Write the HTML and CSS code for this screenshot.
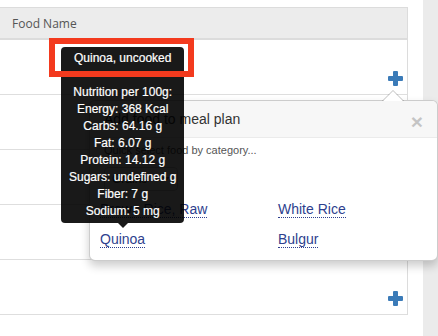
FILE: index.html
```html
<!DOCTYPE html>
<html lang="en">
<head>
  <meta charset="UTF-8" />
  <meta name="viewport" content="width=device-width, initial-scale=1.0"/>
  <title>Meal Planner - Foods</title>
  <link rel="stylesheet" href="styles.css">
</head>
<body>
  <div class="page">
    <div class="content">
      <div class="food-table">
        <div class="head">Food Name</div>
        <div class="row">
          <a href="#" class="add-btn"><svg viewBox="0 0 15 15" width="15" height="15"><rect x="5" y="0" width="5" height="15" rx="1"/><rect x="0" y="5" width="15" height="5" rx="1"/></svg></a>
        </div>
        <div class="row">
          <a href="#" class="add-btn"><svg viewBox="0 0 15 15" width="15" height="15"><rect x="5" y="0" width="5" height="15" rx="1"/><rect x="0" y="5" width="15" height="5" rx="1"/></svg></a>
        </div>
        <div class="row">
          <a href="#" class="add-btn"><svg viewBox="0 0 15 15" width="15" height="15"><rect x="5" y="0" width="5" height="15" rx="1"/><rect x="0" y="5" width="15" height="5" rx="1"/></svg></a>
        </div>
        <div class="row">
          <a href="#" class="add-btn"><svg viewBox="0 0 15 15" width="15" height="15"><rect x="5" y="0" width="5" height="15" rx="1"/><rect x="0" y="5" width="15" height="5" rx="1"/></svg></a>
        </div>
        <div class="row">
          <a href="#" class="add-btn"><svg viewBox="0 0 15 15" width="15" height="15"><rect x="5" y="0" width="5" height="15" rx="1"/><rect x="0" y="5" width="15" height="5" rx="1"/></svg></a>
        </div>
      </div>
    </div>
    <div class="scroll-strip"></div>

    <!-- popover opened from the first plus button -->
    <div class="popover">
      <div class="popover-arrow"></div>
      <div class="popover-title">
        <span>Add food to meal plan</span>
        <span class="close">&times;</span>
      </div>
      <div class="popover-content">
        <p class="quick">Quick select food by category...</p>
        <div class="category-select"><span>Grains</span><span class="caret"></span></div>
        <div class="quick-links">
          <div><a href="#">Brown Rice, Raw</a></div>
          <div><a href="#">White Rice</a></div>
          <div><a href="#">Quinoa</a></div>
          <div><a href="#">Bulgur</a></div>
        </div>
      </div>
    </div>

    <div class="tooltip">
      Quinoa, uncooked<br><br>
      Nutrition per 100g:<br>
      Energy: 368 Kcal<br>
      Carbs: 64.16 g<br>
      Fat: 6.07 g<br>
      Protein: 14.12 g<br>
      Sugars: undefined g<br>
      Fiber: 7 g<br>
      Sodium: 5 mg
    </div>

    <div class="highlight"></div>
  </div>
</body>
</html>
```

FILE: styles.css
```css
* {
  margin: 0;
  padding: 0;
  box-sizing: border-box;
}

body {
  width: 438px;
  height: 336px;
  overflow: hidden;
  background-color: #fff;
  font-family: "Liberation Sans", Arial, sans-serif;
  color: #333;
}

.page {
  position: relative;
  display: flex;
  height: 336px;
}

.content {
  width: 423px;
  padding-top: 7px;
}

.scroll-strip {
  flex-grow: 1;
  background-color: #ebebeb;
}

.food-table {
  width: 408px;
  border-top: 1px solid #dcdcdc;
  border-right: 1px solid #dcdcdc;
}

.food-table .head {
  height: 32px;
  display: flex;
  align-items: center;
  padding-left: 12px;
  background-color: #ececec;
  border-bottom: 2px solid #dcdcdc;
  font-family: "Open Sans", sans-serif;
  font-size: 12px;
  color: #555;
}

.food-table .row {
  height: 55px;
  display: flex;
  justify-content: flex-end;
  align-items: flex-end;
  padding: 0 4px 8px 0;
  border-bottom: 1px solid #dedede;
}

.add-btn {
  display: block;
  width: 15px;
  height: 15px;
}

.add-btn svg {
  display: block;
  fill: #3b7bb8;
}

/* popover */
.popover {
  position: absolute;
  left: 89px;
  top: 100px;
  width: 349px;
  background-color: #fff;
  border: 1px solid rgba(0,0,0,0.2);
  border-radius: 6px;
  box-shadow: 0 5px 10px rgba(0,0,0,0.2);
}

.popover-arrow {
  position: absolute;
  top: -11px;
  left: 292px;
  width: 0;
  height: 0;
  border-style: solid;
  border-width: 0 11px 11px;
  border-color: transparent transparent rgba(0,0,0,0.25);
}

.popover-arrow::after {
  content: "";
  position: absolute;
  top: 1px;
  left: -10px;
  border-style: solid;
  border-width: 0 10px 10px;
  border-color: transparent transparent #fff;
}

.popover-title {
  display: flex;
  justify-content: space-between;
  align-items: center;
  height: 37px;
  padding: 0 14px;
  font-size: 14px;
  line-height: 20px;
  background-color: #f7f7f7;
  border-bottom: 1px solid #ebebeb;
  border-radius: 5px 5px 0 0;
}

.popover-title .close {
  font-size: 21px;
  font-weight: bold;
  line-height: 20px;
  color: #000;
  opacity: 0.2;
  margin-top: 5px;
}

.popover-content {
  padding: 4px 14px 11px;
}

.quick {
  font-size: 11px;
  line-height: 16px;
  color: #555;
}

.category-select {
  margin-top: 9px;
  width: 74px;
  height: 24px;
  display: flex;
  align-items: center;
  justify-content: space-between;
  padding: 0 7px;
  border: 1px solid #ccc;
  border-radius: 4px;
  font-size: 12px;
}

.caret {
  border-style: solid;
  border-width: 4px 4px 0;
  border-color: #555 transparent transparent;
}

.quick-links {
  margin-top: 8px;
  margin-left: -4px;
  display: grid;
  grid-template-columns: 178px 1fr;
  row-gap: 10px;
  font-size: 14px;
  line-height: 20px;
}

.quick-links a {
  color: #2e3f8e;
  text-decoration: none;
  border-bottom: 1px dotted #2e3f8e;
}

/* nutrition tooltip */
.tooltip {
  position: absolute;
  left: 61px;
  top: 47px;
  padding: 3px 8px;
  background-color: rgba(0,0,0,0.9);
  color: #fff;
  border-radius: 4px;
  font-size: 12px;
  line-height: 17px;
  text-align: center;
  white-space: nowrap;
  -webkit-text-stroke: 0.2px #fff;
}

.tooltip::after {
  content: "";
  position: absolute;
  bottom: -5px;
  left: 50%;
  margin-left: -5px;
  border-style: solid;
  border-width: 5px 5px 0;
  border-color: rgba(0,0,0,0.9) transparent transparent;
}

.highlight {
  position: absolute;
  left: 49px;
  top: 38px;
  width: 145px;
  height: 39px;
  border: 6px solid #f33a1e;
}
```
